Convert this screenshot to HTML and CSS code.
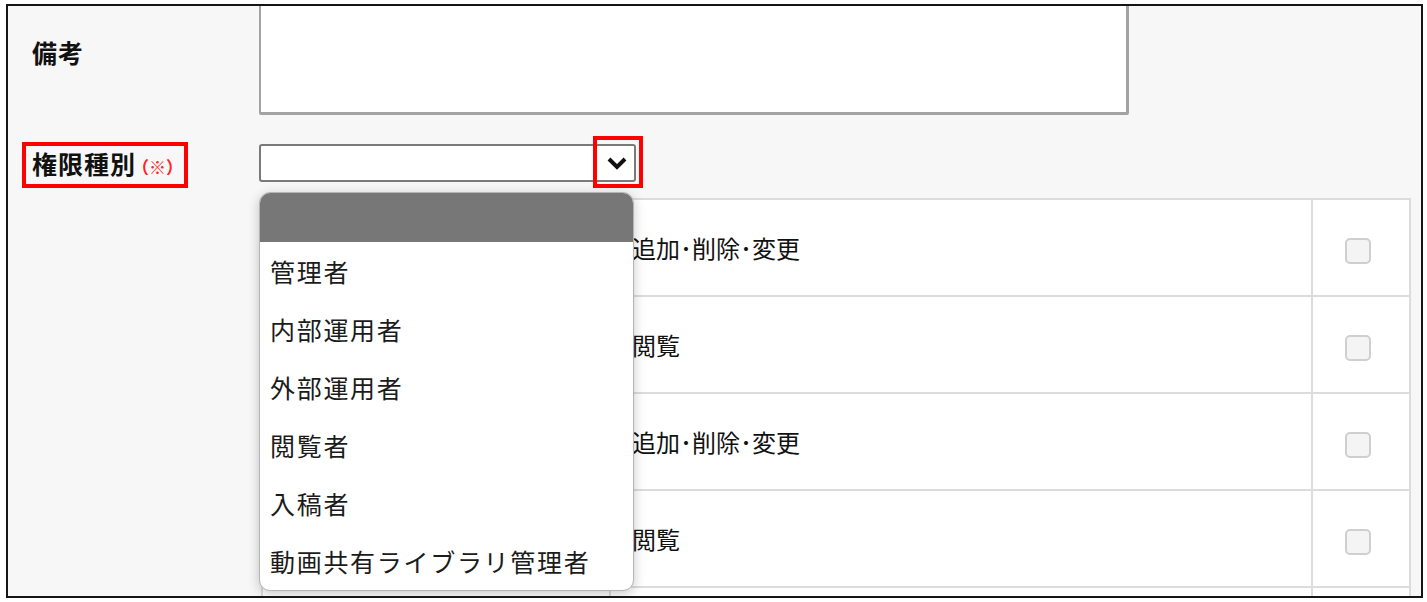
FILE: index.html
```html
<!DOCTYPE html>
<html lang="ja">
<head>
    <meta charset="UTF-8">
    <meta name="viewport" content="width=device-width, initial-scale=1.0">
    <title>権限種別</title>
    <link rel="stylesheet" href="styles.css">
</head>
<body>
    <div class="frame">
        <div class="row row-note">
            <div class="label note-label">備考</div>
            <div class="field">
                <textarea class="note"></textarea>
            </div>
        </div>

        <div class="row row-role">
            <div class="label">
                <span class="mark">権限種別<span class="req">（※）</span></span>
            </div>
            <div class="field select-wrap">
                <div class="select">
                    <svg class="chevron" width="20" height="14" viewBox="0 0 20 14">
                        <polyline points="2,3 10,11 18,3" fill="none" stroke="#111" stroke-width="4" stroke-linejoin="miter"/>
                    </svg>
                </div>
                <span class="mark-chevron"></span>

                <ul class="options">
                    <li class="blank"></li>
                    <li>管理者</li>
                    <li>内部運用者</li>
                    <li>外部運用者</li>
                    <li>閲覧者</li>
                    <li>入稿者</li>
                    <li>動画共有ライブラリ管理者</li>
                </ul>
            </div>
        </div>

        <table class="perm">
            <tr>
                <td class="c-name"></td>
                <td class="c-act">追加･削除･変更</td>
                <td class="c-check"><span class="check"></span></td>
            </tr>
            <tr>
                <td class="c-name"></td>
                <td class="c-act">閲覧</td>
                <td class="c-check"><span class="check"></span></td>
            </tr>
            <tr>
                <td class="c-name"></td>
                <td class="c-act">追加･削除･変更</td>
                <td class="c-check"><span class="check"></span></td>
            </tr>
            <tr>
                <td class="c-name"></td>
                <td class="c-act">閲覧</td>
                <td class="c-check"><span class="check"></span></td>
            </tr>
            <tr>
                <td class="c-name"></td>
                <td class="c-act"></td>
                <td class="c-check"></td>
            </tr>
        </table>
    </div>
</body>
</html>
```

FILE: styles.css
```css
body {
    margin: 0;
    background-color: #fff;
    font-family: "Noto Sans CJK JP", "Noto Sans", sans-serif;
    color: #111;
}

.frame {
    box-sizing: border-box;
    width: 1417px;
    height: 594px;
    margin: 4px 0 0 6px;
    border: 2px solid #151515;
    background-color: #f7f7f7;
    overflow: hidden;
}

.row {
    display: grid;
    grid-template-columns: 251px 1fr;
}

.label {
    font-size: 25px;
    font-weight: bold;
    line-height: 36px;
    letter-spacing: 1px;
}

/* textarea runs above the visible area */
.row-note {
    margin-top: -26px;
}

.note-label {
    padding: 54px 0 0 24px;
}

.note {
    display: block;
    box-sizing: border-box;
    width: 870px;
    height: 135px;
    margin: 0;
    background: #fff;
    border: 2px solid #a3a3a3;
    border-right-width: 3px;
    border-bottom-width: 3px;
    border-radius: 2px;
    resize: none;
}

.row-role {
    margin-top: 29px;
}

.mark {
    display: inline-block;
    margin: -2px 0 0 14px;
    padding: 0 1px 0 6px;
    border: 4px solid #f00;
    line-height: 35px;
}

.req {
    color: #f22;
    font-size: 17px;
    letter-spacing: 0;
    margin-left: -4px;
}

.select-wrap {
    position: relative;
}

.select {
    box-sizing: border-box;
    width: 377px;
    height: 38px;
    background: #fff;
    border: 2px solid #7a7a7a;
    border-radius: 3px;
    display: flex;
    align-items: center;
    justify-content: flex-end;
    padding-right: 7px;
}

.mark-chevron {
    position: absolute;
    left: 334px;
    top: -8px;
    width: 50px;
    height: 52px;
    box-sizing: border-box;
    border: 4px solid #f00;
}

.options {
    position: absolute;
    left: 0;
    top: 48px;
    z-index: 2;
    box-sizing: border-box;
    width: 375px;
    margin: 0;
    padding: 0;
    list-style: none;
    background: #fff;
    border: 1px solid #b5b5b5;
    border-radius: 11px;
    overflow: hidden;
    box-shadow: 0 3px 12px rgba(0, 0, 0, 0.22);
}

.options li {
    height: 58px;
    padding-left: 10px;
    font-size: 25px;
    line-height: 58px;
    letter-spacing: 1.7px;
    color: #1b1b1b;
}

.options .blank {
    height: 49px;
    background: #777;
}

.perm {
    margin: 10px 0 0 253px;
    border-collapse: collapse;
    background: #fff;
}

.perm td {
    height: 95px;
    padding: 0;
    border: 2px solid #dcdcdc;
    font-size: 24px;
}

.c-name {
    width: 346px;
}

.c-act {
    width: 679px;
    padding-left: 21px !important;
}

.c-check {
    width: 90px;
    padding-right: 6px !important;
    text-align: center;
}

.check {
    display: inline-block;
    box-sizing: border-box;
    width: 26px;
    height: 26px;
    border: 2px solid #cfcfcf;
    border-radius: 5px;
    background: #f4f4f4;
    vertical-align: middle;
}
```
